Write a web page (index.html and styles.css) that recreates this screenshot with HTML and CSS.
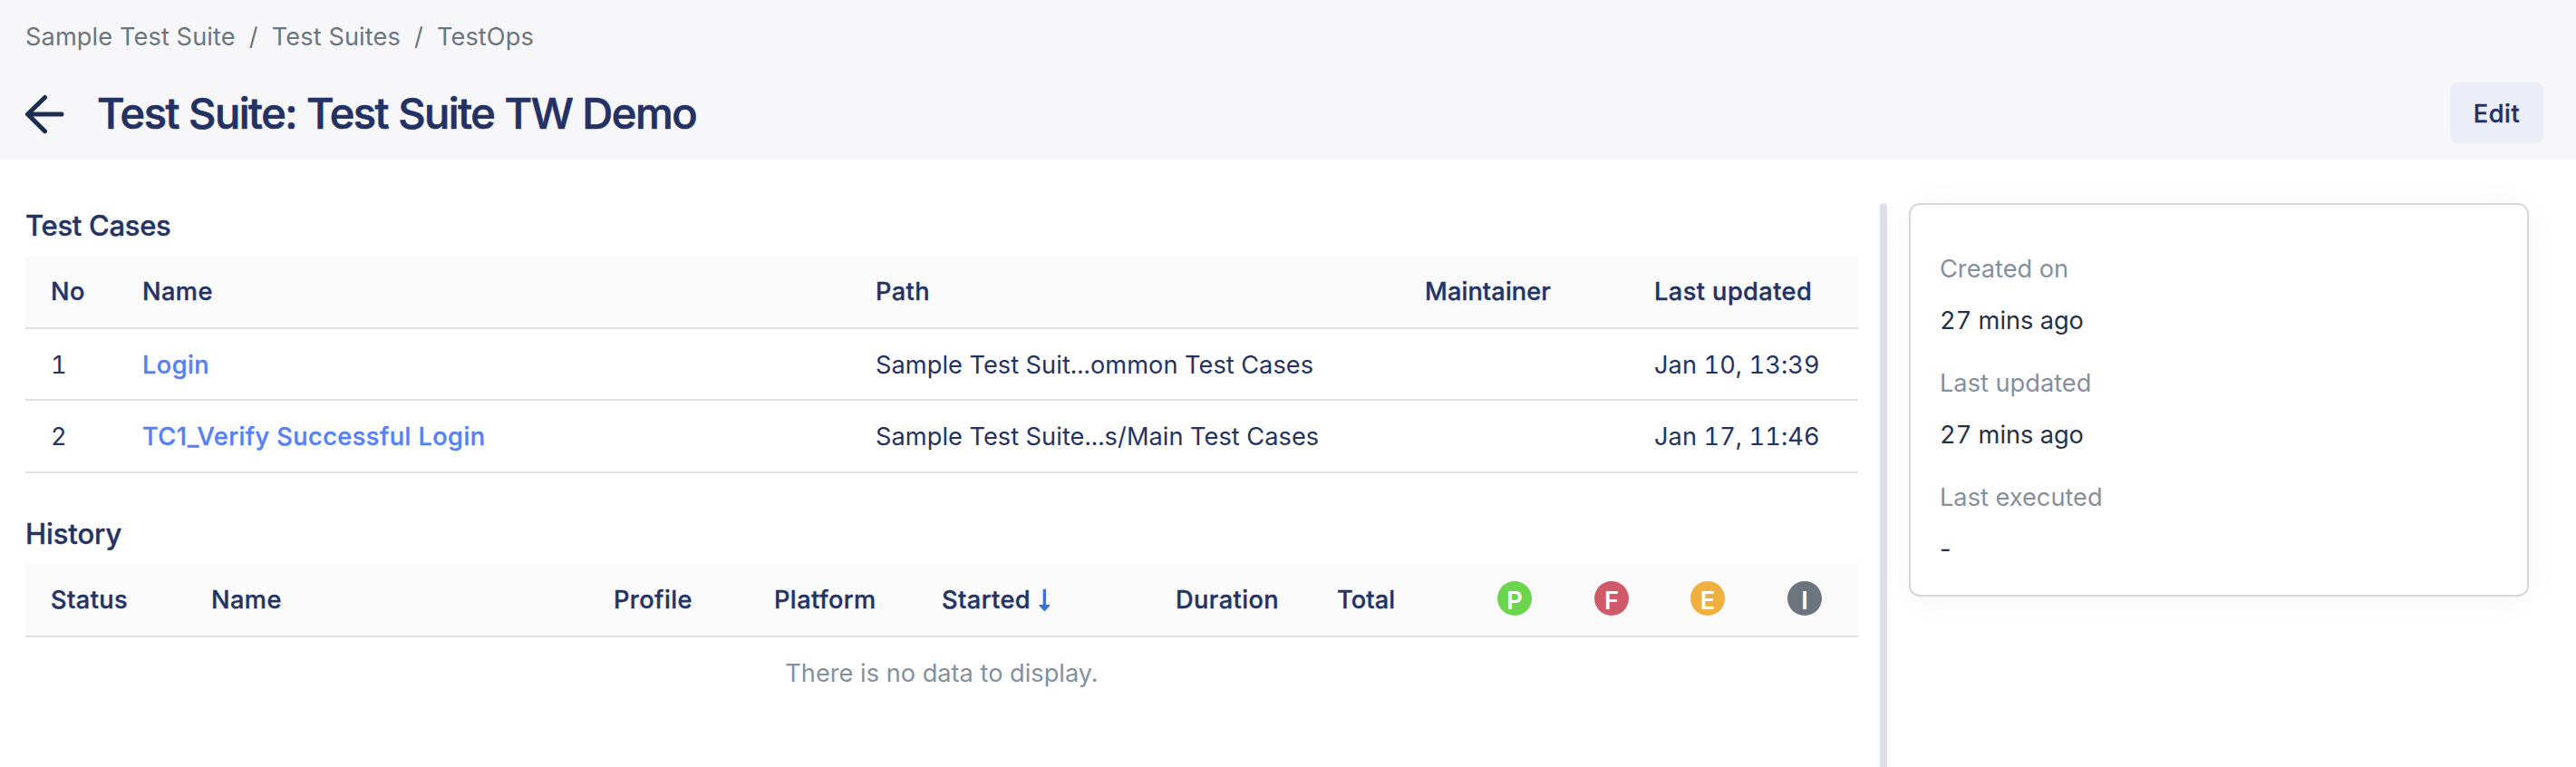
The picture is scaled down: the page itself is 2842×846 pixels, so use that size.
FILE: index.html
```html
<!DOCTYPE html>
<html lang="en">
<head>
<meta charset="utf-8">
<title>Test Suite: Test Suite TW Demo</title>
<link rel="stylesheet" href="styles.css">
</head>
<body>
<header class="page-header">
  <nav class="breadcrumb">
    <a class="crumb crumb-project">Sample Test Suite</a><span class="sep">/</span><a class="crumb crumb-suites">Test Suites</a><span class="sep">/</span><a class="crumb">TestOps</a>
  </nav>
  <div class="title-row">
    <svg class="back" width="44" height="44" viewBox="0 0 44 44" fill="none" stroke="#1c2d50" stroke-width="5" stroke-linecap="round" stroke-linejoin="round"><path d="M21.5 3.5 2.5 22l19 18.7M3 22h37"/></svg>
    <h1 class="title">Test Suite: Test Suite TW Demo</h1>
    <button class="edit">Edit</button>
  </div>
</header>
<main class="content">
  <section class="main-col">
    <h2 class="section-title">Test Cases</h2>
    <div class="table cases">
      <div class="row head"><span>No</span><span>Name</span><span>Path</span><span class="tight">Maintainer</span><span>Last updated</span></div>
      <div class="row"><span>1</span><a class="link">Login</a><span>Sample Test Suit...ommon Test Cases</span><span></span><span>Jan 10, 13:39</span></div>
      <div class="row second"><span>2</span><a class="link">TC1_Verify Successful Login</a><span>Sample Test Suite...s/Main Test Cases</span><span></span><span>Jan 17, 11:46</span></div>
    </div>
    <h2 class="section-title history-title">History</h2>
    <div class="table history">
      <div class="row head">
        <span>Status</span><span>Name</span><span>Profile</span><span>Platform</span>
        <span class="sorted">Started<svg class="sort" width="13" height="26" viewBox="0 0 13 26" fill="#3572ee"><path d="M4.7 1.8Q4.7.5 6.4.5T8.1 1.8V18H11.6Q13.2 18 12.2 19.3L7.5 24.4Q6.4 25.6 5.3 24.4L.6 19.3Q-.4 18 1.2 18H4.7Z"/></svg></span>
        <span>Duration</span><span class="tight">Total</span>
        <b class="badge passed">P</b><b class="badge failed">F</b><b class="badge error">E</b><b class="badge incomplete">I</b>
      </div>
      <p class="empty">There is no data to display.</p>
    </div>
  </section>
  <div class="divider"></div>
  <aside class="card">
    <dl class="details">
      <dt>Created on</dt><dd>27 mins ago</dd>
      <dt>Last updated</dt><dd>27 mins ago</dd>
      <dt>Last executed</dt><dd class="none">-</dd>
    </dl>
  </aside>
</main>
</body>
</html>
```
FILE: styles.css
```css
* { box-sizing: border-box; }
body {
  margin: 0;
  height: 846px;
  overflow: hidden;
  display: flex;
  flex-direction: column;
  background: #fff;
  color: #233363;
  font-family: Inter, "Liberation Sans", sans-serif;
  font-size: 27.2px;
}
h1, h2, p, dl, dd { margin: 0; }

.page-header { height: 176px; flex: none; padding: 0 36px 0 28px; background: #f7f7f9; }
.breadcrumb { display: flex; height: 91px; line-height: 82px; color: #6c757d; letter-spacing: 0.1px; }
.sep { width: 40px; text-align: center; }
.title-row { display: flex; align-items: center; height: 67px; }
.back { flex: none; margin: 3px 35px 0 0; }
.title { font-size: 47px; font-weight: 550; line-height: 67px; letter-spacing: -1.48px; color: #233163; -webkit-text-stroke: 0.7px #233163; }
.edit {
  width: 103px;
  height: 67px;
  margin-left: auto;
  padding: 1px 0 0;
  border: 0;
  border-radius: 8px;
  background: #ebeef6;
  color: #233163;
  font: 550 27.2px/67px Inter, "Liberation Sans", sans-serif;
  letter-spacing: 0.5px;
  -webkit-text-stroke: 0.35px #233163;
}

.content { flex: 1; display: flex; padding: 48px 52px 0 28px; }
.main-col { width: 2022px; flex: none; }
.section-title { height: 58px; font-size: 31px; font-weight: 550; line-height: 50px; letter-spacing: -0.3px; -webkit-text-stroke: 0.35px currentColor; }
.history-title { height: 100px; padding-top: 42px; letter-spacing: -0.1px; }

.row { display: grid; align-items: center; height: 79px; padding-left: 28px; border-bottom: 2px solid #e0e0e0; font-variant-numeric: tabular-nums; letter-spacing: 0.07px; }
.row:not(.head) > * { padding-top: 1px; }
.row.second { height: 80px; }
.row.head { height: 81px; background: #fafafa; font-weight: 550; letter-spacing: 0.42px; -webkit-text-stroke: 0.35px currentColor; }
.row .tight { letter-spacing: 0.1px; }
.cases .row { grid-template-columns: 101px 809px 606px 253px 1fr; }
.history .row { grid-template-columns: 177px 444px 177px 185px 258px 178px 177px 107px 106px 107px 1fr; }
.row .link { color: #5780f5; font-weight: 550; letter-spacing: 0.44px; font-variant-numeric: normal; -webkit-text-stroke: 0.35px currentColor; }
.sorted { display: flex; align-items: center; gap: 9px; }
.badge {
  width: 38px;
  height: 38px;
  margin-bottom: 3px;
  border-radius: 50%;
  color: #fff;
  font-weight: 600;
  line-height: 44px;
  text-align: center;
  letter-spacing: 0;
  -webkit-text-stroke: 0;
}
.passed { background: #6bd64d; }
.failed { background: #d15a6a; }
.error { background: #f0b03f; }
.incomplete { background: #6c757d; }
.empty { line-height: 79px; text-align: center; color: #858f9d; }

.divider { flex: none; width: 8px; margin-left: 24px; border-radius: 4px 4px 0 0; background: #dddfe9; }
.card {
  width: 684px;
  height: 434px;
  margin-left: 24px;
  padding: 42px 32px 24px;
  border: 2px solid #d5d9de;
  border-radius: 12px;
  background: #fff;
  box-shadow: 0 4px 40px rgba(0, 0, 0, 0.04);
}
.details { line-height: 57px; }
.details dt { color: #858f9d; }
.details dd { margin-bottom: 12px; color: #243147; font-variant-numeric: tabular-nums; }
.details .none { font-variant-numeric: normal; }
```
